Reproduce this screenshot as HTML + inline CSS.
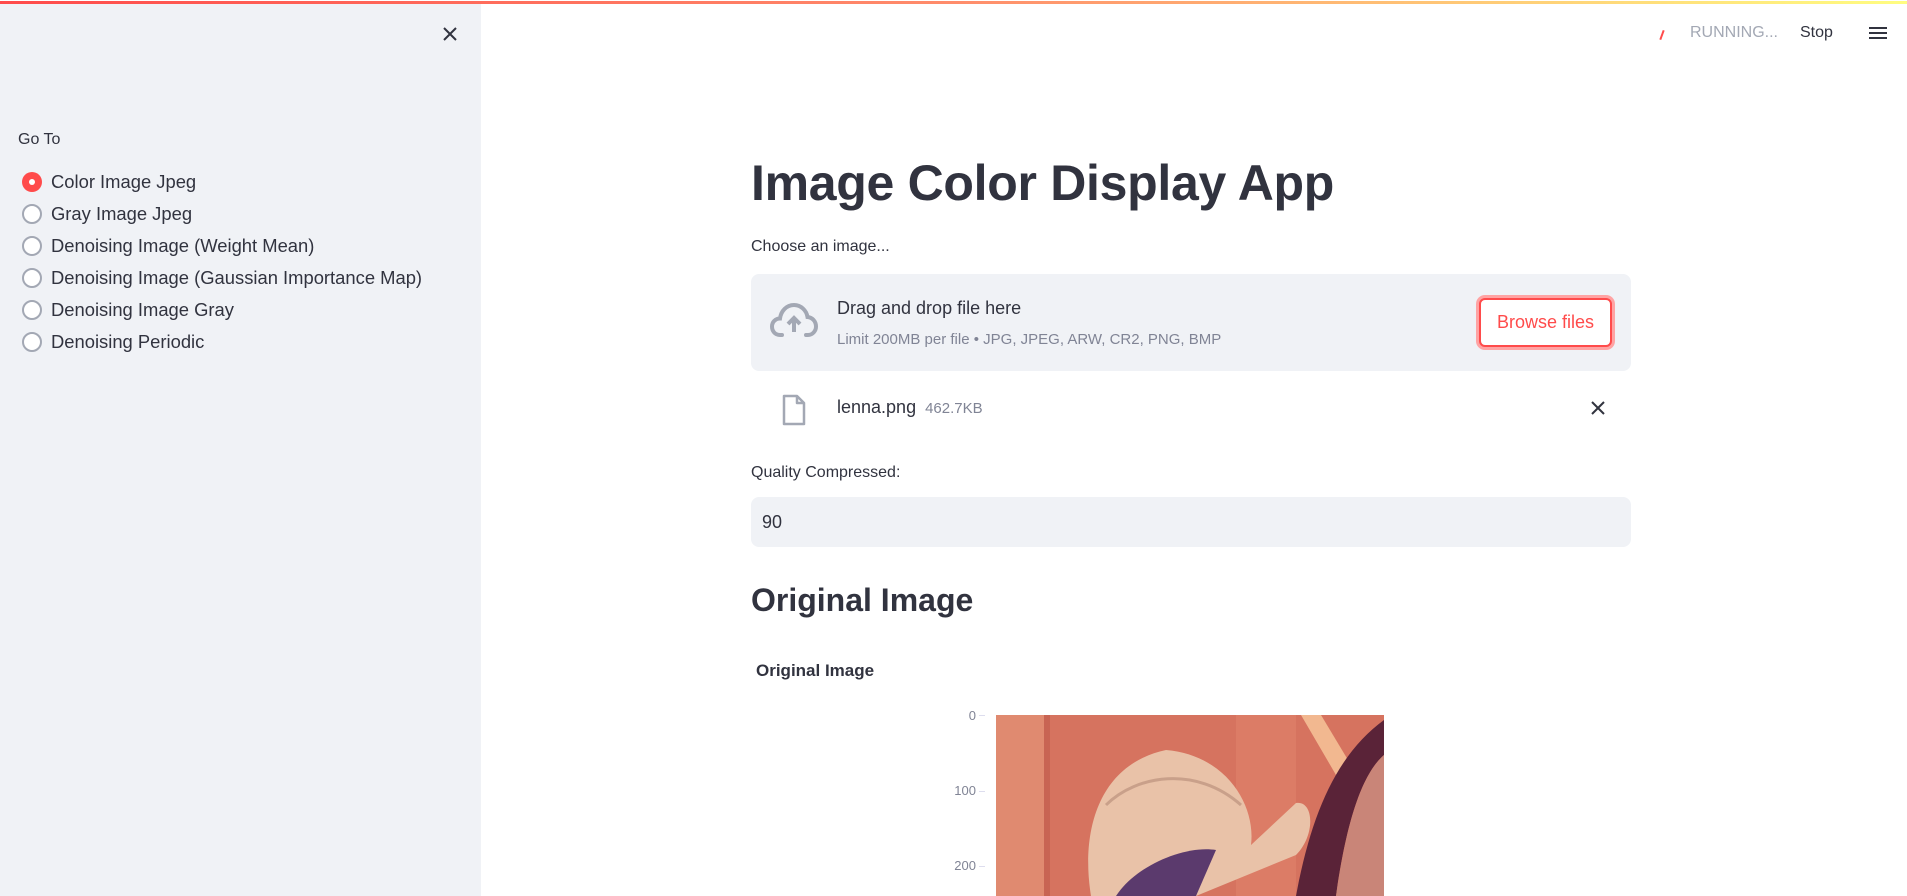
<!DOCTYPE html>
<html><head><meta charset="utf-8"><style>
*{margin:0;padding:0;box-sizing:border-box}
body{width:1907px;height:896px;overflow:hidden;background:#fff;font-family:"Liberation Sans",sans-serif;color:#31333f;position:relative}
.abs{position:absolute}
#bar{left:0;top:1px;width:1907px;height:3px;background:linear-gradient(90deg,#ff4b4b,#ff8c6b 50%,#fffd80)}
#side{left:0;top:4px;width:481px;height:892px;background:#f0f2f6}
.radio{position:absolute;left:22px;width:20px;height:20px;border-radius:50%;border:2px solid #a3a8b4;background:#fff}
.radio.on{border:none;background:#ff4b4b}
.radio.on::after{content:"";position:absolute;left:7px;top:7px;width:6px;height:6px;border-radius:50%;background:#fff}
.rl{position:absolute;left:51px;font-size:18.4px;color:#31333f;line-height:22px}
</style></head><body>
<div id="bar" class="abs"></div>
<div id="side" class="abs">
<svg class="abs" style="left:442px;top:22px" width="16" height="16" viewBox="0 0 16 16"><path d="M2 2L14 14M14 2L2 14" stroke="#31333f" stroke-width="2"/></svg>
<div class="abs" style="left:18px;top:127px;font-size:16px">Go To</div>
<div class="radio on" style="top:168px"></div><div class="rl" style="top:167px">Color Image Jpeg</div>
<div class="radio" style="top:200px"></div><div class="rl" style="top:199px">Gray Image Jpeg</div>
<div class="radio" style="top:232px"></div><div class="rl" style="top:231px">Denoising Image (Weight Mean)</div>
<div class="radio" style="top:264px"></div><div class="rl" style="top:263px">Denoising Image (Gaussian Importance Map)</div>
<div class="radio" style="top:296px"></div><div class="rl" style="top:295px">Denoising Image Gray</div>
<div class="radio" style="top:328px"></div><div class="rl" style="top:327px">Denoising Periodic</div>
</div>
<div class="abs" style="left:1661px;top:30px;width:2px;height:10px;background:#ff4b4b;transform:rotate(20deg)"></div>
<div class="abs" style="left:1690px;top:24px;font-size:16px;color:#a3a8b4">RUNNING...</div>
<div class="abs" style="left:1800px;top:24px;font-size:16px;color:#31333f">Stop</div>
<div class="abs" style="left:1869px;top:27px;width:18px;height:2px;background:#31333f;box-shadow:0 5px 0 #31333f,0 10px 0 #31333f"></div>

<div class="abs" style="left:751px;top:154px;font-size:50px;font-weight:bold;letter-spacing:-0.3px">Image Color Display App</div>
<div class="abs" style="left:751px;top:238px;font-size:16px">Choose an image...</div>
<div class="abs" style="left:751px;top:274px;width:880px;height:97px;background:#f0f2f6;border-radius:8px"></div>
<svg class="abs" style="left:770px;top:302px" width="48" height="38" viewBox="0 0 48 38"><path d="M12 33H10C5 33 2 29 2 24.5 2 20 5.5 16.5 10 16.5 11 9 16.5 3 24 3 31 3 36.5 8.5 37.5 15 42.5 15.5 46 19.5 46 24.5 46 29 42.5 33 38 33H36" fill="none" stroke="#a3a8b4" stroke-width="4" stroke-linecap="round"/><path d="M24 30V17M18 22L24 16 30 22" fill="none" stroke="#a3a8b4" stroke-width="4"/></svg>
<div class="abs" style="left:837px;top:298px;font-size:18px">Drag and drop file here</div>
<div class="abs" style="left:837px;top:331px;font-size:15px;color:#808495">Limit 200MB per file • JPG, JPEG, ARW, CR2, PNG, BMP</div>
<div class="abs" style="left:1479px;top:298px;width:133px;height:49px;border:2px solid #ff4b4b;box-shadow:0 0 0 3px #ffa3a3;border-radius:6px;background:#fff;color:#ff4b4b;font-size:18px;text-align:center;line-height:44px">Browse files</div>
<svg class="abs" style="left:782px;top:394px" width="24" height="32" viewBox="0 0 24 32"><path d="M2 2H15L22 9V30H2Z M15 2V9H22" fill="none" stroke="#a3a8b4" stroke-width="2.5" stroke-linejoin="round"/></svg>
<div class="abs" style="left:837px;top:397px;font-size:18px">lenna.png <span style="font-size:15px;color:#808495;margin-left:4px">462.7KB</span></div>
<svg class="abs" style="left:1591px;top:401px" width="14" height="14" viewBox="0 0 14 14"><path d="M1 1L13 13M13 1L1 13" stroke="#31333f" stroke-width="2"/></svg>
<div class="abs" style="left:751px;top:464px;font-size:16px">Quality Compressed:</div>
<div class="abs" style="left:751px;top:497px;width:880px;height:50px;background:#f0f2f6;border-radius:8px"></div>
<div class="abs" style="left:762px;top:512px;font-size:18px">90</div>
<div class="abs" style="left:751px;top:582px;font-size:32px;font-weight:bold">Original Image</div>
<div class="abs" style="left:756px;top:661px;font-size:17px;font-weight:bold">Original Image</div>
<div class="abs" style="left:940px;top:708px;width:36px;text-align:right;font-size:13px;color:#808495">0</div>
<div class="abs" style="left:940px;top:783px;width:36px;text-align:right;font-size:13px;color:#808495">100</div>
<div class="abs" style="left:940px;top:858px;width:36px;text-align:right;font-size:13px;color:#808495">200</div>
<div class="abs" style="left:979px;top:715px;width:6px;height:1px;background:#dde"></div>
<div class="abs" style="left:979px;top:791px;width:6px;height:1px;background:#dde"></div>
<div class="abs" style="left:979px;top:866px;width:6px;height:1px;background:#dde"></div>
<svg class="abs" style="left:996px;top:715px" width="388" height="181" viewBox="0 0 388 181">
<rect width="388" height="181" fill="#d6735f"/>
<rect x="0" y="0" width="48" height="181" fill="#e08a70"/>
<rect x="48" y="0" width="6" height="181" fill="#c86453"/>
<rect x="240" y="0" width="60" height="181" fill="#dc7c66"/>
<path d="M305 0L325 0 355 50 340 60Z" fill="#f2b890"/>
<path d="M388 5C340 40 315 100 300 181H340C350 110 365 60 388 40Z" fill="#5a2338"/>
<path d="M388 40C365 60 350 110 340 181H388Z" fill="#c98578"/>
<path d="M95 181C85 120 100 50 170 35 230 40 260 90 255 130L300 88C318 85 320 120 300 140L200 181Z" fill="#e9c2a8"/>
<path d="M110 90C140 60 200 50 245 90" fill="none" stroke="#c9a08a" stroke-width="3"/>
<path d="M120 181C140 150 190 130 220 135L200 181Z" fill="#5b3a6d"/>
</svg>
</body></html>
